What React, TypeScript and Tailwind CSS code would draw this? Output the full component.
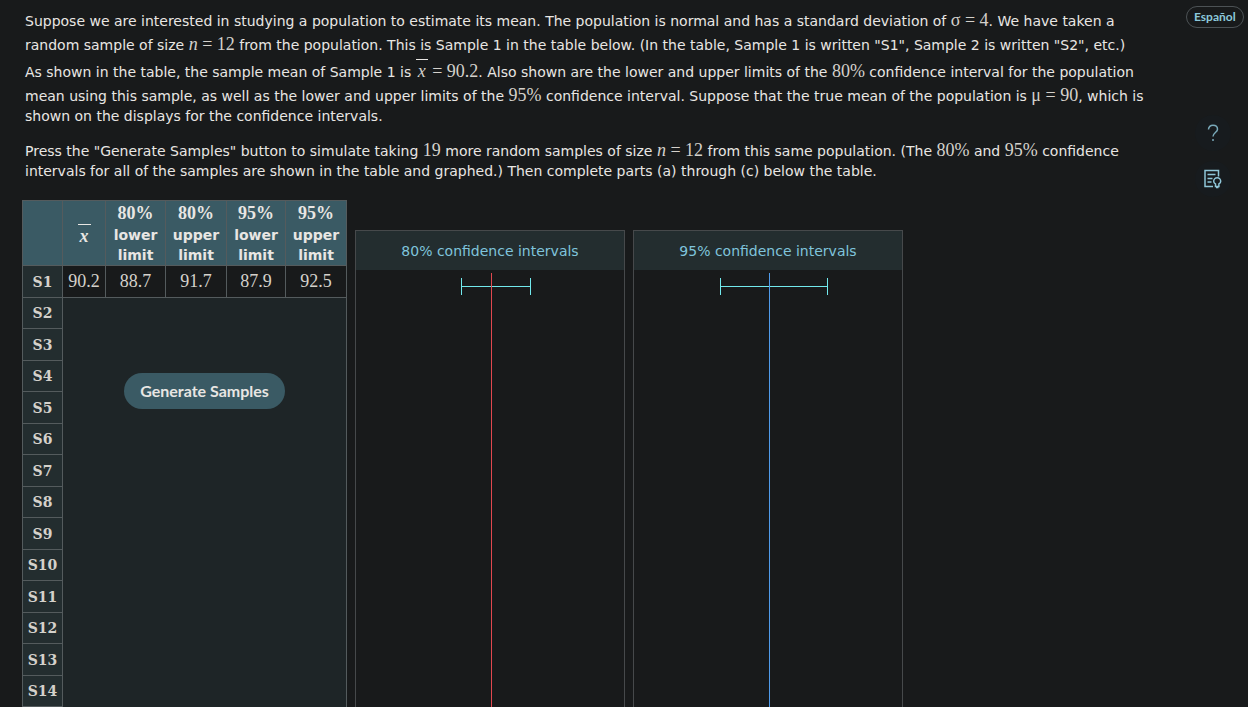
import type { ReactNode } from 'react'

const SAMPLE_ROWS = Array.from({ length: 19 }, (_, i) => `S${i + 2}`)

const HEADERS = [
  ['80%', 'lower'],
  ['80%', 'upper'],
  ['95%', 'lower'],
  ['95%', 'upper'],
]

const FIRST_SAMPLE = ['90.2', '88.7', '91.7', '87.9', '92.5']

function Num({ children }: { children: ReactNode }) {
  return (
    <span className="inline-block pt-0.5 font-['Liberation_Serif',serif] text-lg leading-[22px] text-[#d4d1cb]">
      {children}
    </span>
  )
}

function XBar() {
  return (
    <span className="mt-0.5 inline-block border-t border-[#e8e6e3] px-0.5 pt-[3px] leading-4 italic">x</span>
  )
}

function RowLabel({ children }: { children: ReactNode }) {
  return (
    <th
      scope="row"
      className="border border-[#545b5d] bg-[#232d2f] font-['DejaVu_Serif',serif] text-sm text-[#d4d1cb]"
    >
      {children}
    </th>
  )
}

function IntervalPanel({
  title,
  left,
  right,
  mean,
  lineColor,
}: {
  title: string
  left: number
  right: number
  mean: number
  lineColor: string
}) {
  return (
    <section className="flex w-[270px] flex-col border border-[#46494b]">
      <h2 className="bg-[#232d2f] pt-2.5 pb-[9px] text-center text-sm leading-5 text-[#7fc4dc]">{title}</h2>
      <svg className="w-full" height="650" viewBox="0 0 268 650" fill="none" shapeRendering="crispEdges">
        <path
          d={`M${left} 16.5H${right}M${left + 0.5} 8V25M${right + 0.5} 8V25`}
          stroke="#72e9ed"
        />
        <path d={`M${mean + 0.5} 3V650`} stroke={lineColor} />
      </svg>
    </section>
  )
}

function SampleTable() {
  return (
    <table className="w-[325px] shrink-0 table-fixed border-collapse text-center">
      <colgroup>
        <col className="w-10" />
        <col className="w-[43px]" />
        <col className="w-[60px]" />
        <col className="w-[61px]" />
        <col className="w-[59px]" />
        <col className="w-[61px]" />
      </colgroup>
      <thead>
        <tr className="bg-[#3a5a64] text-sm leading-5 text-[#e8e6e3]">
          <th className="border border-[#545b5d]" aria-label="Sample" />
          <th className="border border-[#545b5d] pt-1.5 font-['Liberation_Serif',serif] text-lg">
            <XBar />
          </th>
          {HEADERS.map(([level, bound]) => (
            <th key={level + bound} className="border border-[#545b5d]">
              <span className="block font-['Liberation_Serif',serif] text-lg leading-6">{level}</span>
              {bound}
              <br />
              limit
            </th>
          ))}
        </tr>
      </thead>
      <tbody>
        <tr className="h-8">
          <RowLabel>S1</RowLabel>
          {FIRST_SAMPLE.map(value => (
            <td
              key={value}
              className="border border-[#545b5d] pb-0.5 font-['Liberation_Serif',serif] text-lg leading-6 text-[#d4d1cb]"
            >
              {value}
            </td>
          ))}
        </tr>
        {SAMPLE_ROWS.map((name, i) => (
          <tr key={name} className={i % 2 === 0 ? 'h-[31px]' : 'h-8'}>
            <RowLabel>{name}</RowLabel>
            {i === 0 && (
              <td
                colSpan={5}
                rowSpan={SAMPLE_ROWS.length}
                className="border border-[#545b5d] bg-[#1e2527] pt-[75px] align-top"
              >
                <button
                  type="button"
                  className="h-9 rounded-full bg-[#3a5a64] px-4 font-['Lato',sans-serif] text-base font-bold text-[#e8e6e3]"
                >
                  Generate Samples
                </button>
              </td>
            )}
          </tr>
        ))}
      </tbody>
    </table>
  )
}

export default function App() {
  return (
    <div className="flex min-h-screen justify-between bg-[#181a1b] font-['DejaVu_Sans',Verdana,sans-serif] text-sm leading-5 text-[#e8e6e3]">
      <main className="min-w-0 flex-1 pt-[7px] pl-[22px]">
        <div className="px-[3px]">
          <p>
            Suppose we are interested in studying a population to estimate its mean. The population is normal and has a standard deviation of <Num>σ = 4</Num>. We have taken a
            <br />
            random sample of size <Num><i>n</i> = 12</Num> from the population. This is Sample 1 in the table below. (In the table, Sample 1 is written "S1", Sample 2 is written "S2", etc.)
            <br />
            As shown in the table, the sample mean of Sample 1 is <Num><XBar /> = 90.2</Num>. Also shown are the lower and upper limits of the <Num>80%</Num> confidence interval for the population
            <br />
            mean using this sample, as well as the lower and upper limits of the <Num>95%</Num> confidence interval. Suppose that the true mean of the population is <Num>μ = 90</Num>, which is
            <br />
            shown on the displays for the confidence intervals.
          </p>
          <p className="mt-[11px]">
            Press the "Generate Samples" button to simulate taking <Num>19</Num> more random samples of size <Num><i>n</i> = 12</Num> from this same population. (The <Num>80%</Num> and <Num>95%</Num> confidence
            <br />
            intervals for all of the samples are shown in the table and graphed.) Then complete parts (a) through (c) below the table.
          </p>
        </div>
        <div className="mt-[19px] flex items-start gap-2">
          <SampleTable />
          <div className="mt-[30px] flex gap-2">
            <IntervalPanel title="80% confidence intervals" left={105} right={174} mean={135} lineColor="#e0484f" />
            <IntervalPanel title="95% confidence intervals" left={86} right={193} mean={135} lineColor="#4f9bea" />
          </div>
        </div>
      </main>
      <aside className="flex w-[62px] flex-col items-start pt-1.5">
        <button
          type="button"
          className="h-[22px] rounded-full border border-[#4c5255] px-[7px] font-['Lato',sans-serif] text-xs leading-5 font-bold text-[#8cc8da]"
        >
          Español
        </button>
        <button type="button" aria-label="Help" className="mt-[87px] ml-[9px] grid size-9 place-items-center rounded-full bg-[#171b1e]">
          <svg width="12" height="18" viewBox="0 0 12 18" fill="none" stroke="#79a9b9" strokeWidth="1.5">
            <path d="M1.5 5.5C1.5 2.8 3.4 1.2 6 1.2s4.5 1.6 4.5 4c0 3.2-4.5 3.5-4.5 7.3M6 15v2" />
          </svg>
        </button>
        <button type="button" aria-label="Notes" className="mt-2.5 ml-[9px] grid size-9 place-items-center rounded-full bg-[#171b1e]">
          <svg width="20" height="20" viewBox="0 0 20 20" fill="none" stroke="#8fc6d8" strokeWidth="1.5">
            <path d="M10 17.5H2V1.5h13.5v6M4.5 5.5h8M4.5 9.5h5M4.5 13h4" />
            <path d="M12.5 15c-1.2-.6-1.8-1.7-1.8-2.8a3.5 3.5 0 0 1 7 0c0 1.1-.6 2.2-1.8 2.8v2.5h-3.4zM13 18.5h2.5" />
          </svg>
        </button>
      </aside>
    </div>
  )
}
